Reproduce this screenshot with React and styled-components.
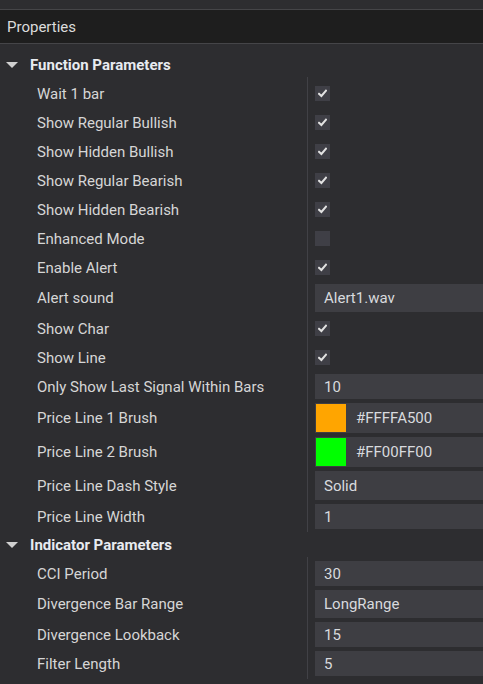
import React from "react";
import styled, { createGlobalStyle } from "styled-components";

const GlobalStyle = createGlobalStyle`
  html, body {
    margin: 0;
    padding: 0;
    background: #2d2d30;
  }
  body {
    font-family: Roboto, "Liberation Sans", sans-serif;
    color: #d4d4d4;
    overflow: hidden;
  }
`;

const Panel = styled.div`
  width: 483px;
  height: 684px;
  background: #2d2d30;
  overflow: hidden;
`;

const TopStrip = styled.div`
  height: 9px;
  border-bottom: 1px solid #454548;
`;

const Header = styled.div`
  height: 33px;
  display: flex;
  align-items: center;
  padding-left: 7px;
  background: #1e1e1e;
  border-bottom: 1px solid #454548;
  font-size: 15px;
  color: #dcdcdc;
`;

const List = styled.div`
  padding-top: 8px;
`;

const SectionHeader = styled.div`
  height: 25px;
  display: flex;
  align-items: center;
  gap: 12px;
  padding-left: 6px;
  font-size: 15px;
  font-weight: 700;
  color: #e8ebf0;
`;

const Caret = styled.span`
  width: 0;
  height: 0;
  border-left: 6px solid transparent;
  border-right: 6px solid transparent;
  border-top: 6px solid #d0d0d0;
`;

const Group = styled.div`
  display: grid;
  grid-template-columns: 307px 1fr;
  padding: 2px 0 1px;
  background: linear-gradient(#414146, #414146) 307px 0 / 1px 100% no-repeat;
`;

const Label = styled.div`
  display: flex;
  align-items: center;
  padding-left: 37px;
  font-size: 15px;
  color: #d6d6d6;
  white-space: nowrap;
`;

const Value = styled.div`
  display: flex;
  align-items: center;
  min-height: ${(p) => p.$h || 29}px;
  padding: ${(p) => (p.$h ? "2px 0" : "0")};
  padding-left: 8px;
  box-sizing: border-box;
`;

const CheckBox = styled.span`
  width: 15px;
  height: 15px;
  display: flex;
  align-items: center;
  justify-content: center;
  background: #3f3f46;
`;

const Field = styled.div`
  flex: 1;
  height: ${(p) => p.$h}px;
  display: flex;
  align-items: center;
  gap: 10px;
  padding: ${(p) => (p.$swatch ? "0 0 0 1px" : "0 0 0 9px")};
  background: #3e3e43;
  font-size: 15px;
  color: #d8dade;
  white-space: nowrap;
`;

const Swatch = styled.span`
  width: 30px;
  height: ${(p) => p.$h - 2}px;
  background: ${(p) => p.$color};
`;

// small bold tick drawn inside the box
const Check = ({ on }) => (
  <CheckBox>
    {on && (
      <svg width="9" height="9" viewBox="0 0 9 9">
        <path
          d="M1 4.8 L3.4 7 L8 1.6"
          fill="none"
          stroke="#e2e2e2"
          strokeWidth="2"
          strokeLinecap="square"
        />
      </svg>
    )}
  </CheckBox>
);

const functionParams = [
  { label: "Wait 1 bar", check: true },
  { label: "Show Regular Bullish", check: true },
  { label: "Show Hidden Bullish", check: true },
  { label: "Show Regular Bearish", check: true },
  { label: "Show Hidden Bearish", check: true },
  { label: "Enhanced Mode", check: false },
  { label: "Enable Alert", check: true },
  { label: "Alert sound", text: "Alert1.wav", h: 28 },
  { label: "Show Char", check: true },
  { label: "Show Line", check: true },
  { label: "Only Show Last Signal Within Bars", text: "10", h: 25 },
  { label: "Price Line 1 Brush", text: "#FFFFA500", color: "#ffa500", h: 30 },
  { label: "Price Line 2 Brush", text: "#FF00FF00", color: "#00ff00", h: 30 },
  { label: "Price Line Dash Style", text: "Solid", h: 29 },
  { label: "Price Line Width", text: "1", h: 25 },
];

const indicatorParams = [
  { label: "CCI Period", text: "30", h: 25 },
  { label: "Divergence Bar Range", text: "LongRange", h: 28 },
  { label: "Divergence Lookback", text: "15", h: 25 },
  { label: "Filter Length", text: "5", h: 25 },
];

const PropRow = ({ item }) => (
  <>
    <Label>{item.label}</Label>
    {item.text === undefined ? (
      <Value>
        <Check on={item.check} />
      </Value>
    ) : (
      <Value $h={item.h}>
        <Field $h={item.h} $swatch={!!item.color}>
          {item.color && <Swatch $color={item.color} $h={item.h} />}
          {item.text}
        </Field>
      </Value>
    )}
  </>
);

const Section = ({ title, items }) => (
  <>
    <SectionHeader>
      <Caret />
      {title}
    </SectionHeader>
    <Group>
      {items.map((item) => (
        <PropRow key={item.label} item={item} />
      ))}
    </Group>
  </>
);

export default function App() {
  return (
    <Panel>
      <GlobalStyle />
      <TopStrip />
      <Header>Properties</Header>
      <List>
        <Section title="Function Parameters" items={functionParams} />
        <Section title="Indicator Parameters" items={indicatorParams} />
      </List>
    </Panel>
  );
}
